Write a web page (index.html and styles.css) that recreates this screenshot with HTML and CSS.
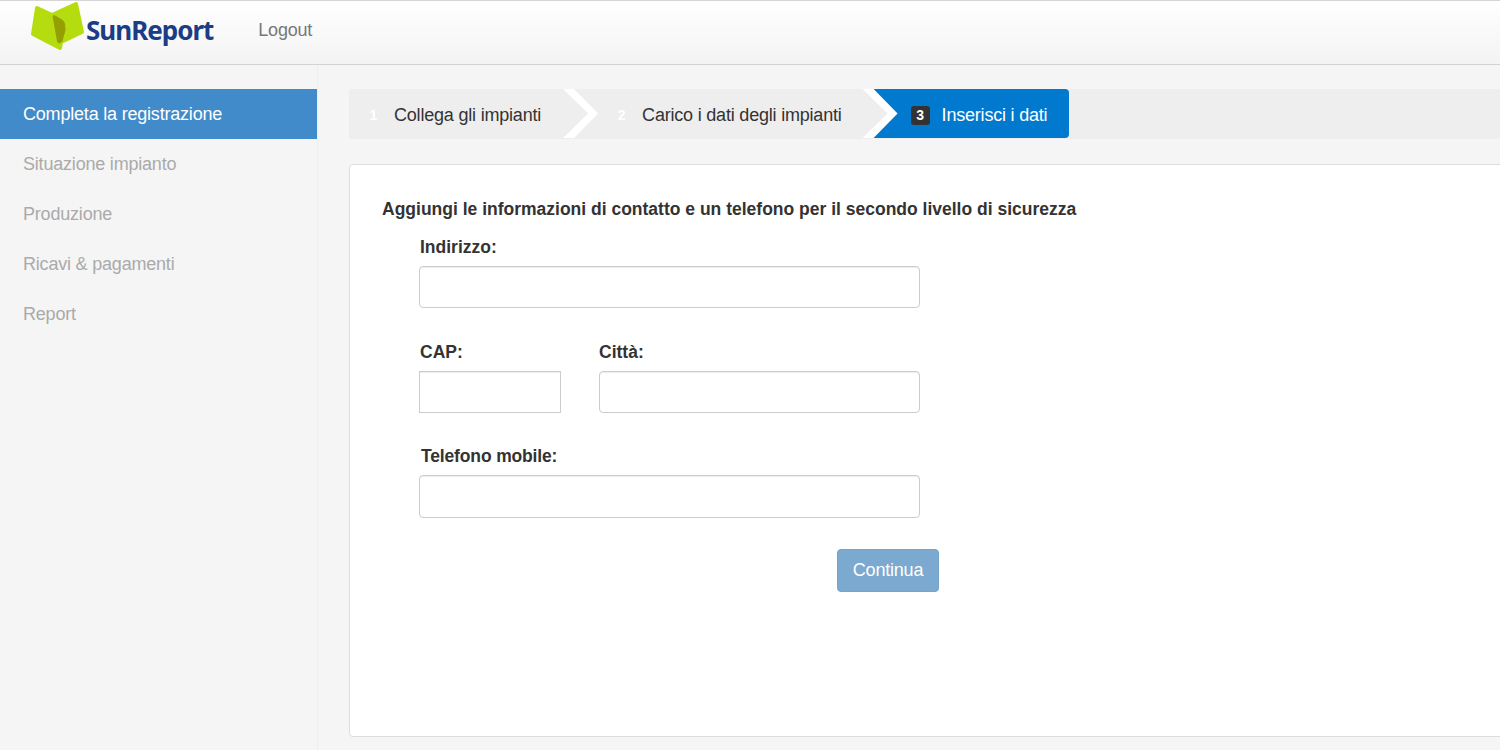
FILE: index.html
```html
<!DOCTYPE html>
<html lang="it">
<head>
<meta charset="utf-8">
<title>SunReport</title>
<link rel="stylesheet" href="styles.css">
</head>
<body>
<header class="topbar">
  <a class="brand" href="#">
    <svg class="brand-mark" width="58" height="52" viewBox="0 0 58 52" aria-hidden="true">
      <path class="mark-light" d="M8 7 L23 14 L47 3 L53 31 L32 41 L31 47 L4 33 Z"/>
      <path class="mark-dark" d="M24 15 Q24 14 26 15 L33 19 Q35 20 35.500 23 L36 29 L33 40 Q32 42 30 42 Q29 42 28.500 40 Z"/>
    </svg>
    <span class="brand-name">SunReport</span>
  </a>
  <a class="logout" href="#">Logout</a>
</header>
<div class="layout">
  <nav class="sidebar">
    <a class="nav-item active" href="#">Completa la registrazione</a>
    <a class="nav-item" href="#">Situazione impianto</a>
    <a class="nav-item" href="#">Produzione</a>
    <a class="nav-item" href="#">Ricavi &amp; pagamenti</a>
    <a class="nav-item" href="#">Report</a>
  </nav>
  <main class="content">
    <ol class="steps">
      <li class="step first"><span class="badge">1</span><span>Collega gli impianti</span></li>
      <li class="step second"><span class="badge">2</span><span>Carico i dati degli impianti</span></li>
      <li class="step current"><span class="badge">3</span><span>Inserisci i dati</span></li>
    </ol>
    <section class="card">
      <h1 class="card-title">Aggiungi le informazioni di contatto e un telefono per il secondo livello di sicurezza</h1>
      <form class="form">
        <label class="field address">
          <span class="label">Indirizzo:</span>
          <input class="input" type="text">
        </label>
        <div class="row">
          <label class="field cap">
            <span class="label">CAP:</span>
            <input class="input square" type="text">
          </label>
          <label class="field city">
            <span class="label flush">Città:</span>
            <input class="input" type="text">
          </label>
        </div>
        <label class="field phone">
          <span class="label shifted">Telefono mobile:</span>
          <input class="input tall" type="text">
        </label>
        <div class="actions"><button class="button" type="button">Continua</button></div>
      </form>
    </section>
  </main>
</div>
</body>
</html>
```
FILE: styles.css
```css
* { box-sizing: border-box; }
html, body { height: 100%; }
body {
  margin: 0;
  height: 750px;
  overflow: hidden;
  background: #f5f5f5;
  color: #333;
  font-family: "Liberation Sans", Arial, sans-serif;
  font-size: 18px;
  letter-spacing: -0.2px;
  display: flex;
  flex-direction: column;
}
a { text-decoration: none; }

.topbar {
  height: 65px;
  flex: none;
  display: flex;
  align-items: flex-start;
  border-top: 1px solid #d5d5d5;
  border-bottom: 1px solid #d2d2d2;
  background: linear-gradient(#ffffff, #f3f3f3);
}
.brand { display: flex; align-items: flex-start; margin-left: 29px; }
.brand-mark { display: block; flex: none; }
.mark-light { fill: #b5dc0e; stroke: #b5dc0e; stroke-width: 4; stroke-linejoin: round; }
.mark-dark { fill: #949f02; stroke: #949f02; stroke-width: 1; stroke-linejoin: round; }
.brand-name {
  margin: 12px 0 0 -1px;
  font-family: "Noto Sans", sans-serif;
  font-weight: 700;
  font-size: 26px;
  line-height: 34px;
  letter-spacing: -1px;
  color: #1b3d86;
}
.logout { margin: 18px 0 0 45px; color: #777; line-height: 22px; }

.layout { flex: 1; display: flex; min-height: 0; }
.sidebar {
  width: 318px;
  flex: none;
  padding-top: 24px;
  border-right: 1px solid #eeeeee;
}
.nav-item {
  display: block;
  height: 50px;
  line-height: 50px;
  padding-left: 23px;
  color: #aaa;
}
.nav-item.active { background: #428bca; color: #fff; }

.content { flex: 1; min-width: 0; padding: 24px 0 0 31px; }
.steps {
  display: flex;
  list-style: none;
  margin: 0;
  padding: 0;
  height: 50px;
  background: #eeeeee;
  border-top-left-radius: 4px;
}
.step {
  position: relative;
  display: flex;
  align-items: center;
  height: 49px;
  padding: 3px 22px 0 48px;
  color: #333;
}
.step.first { padding-left: 15px; border-top-left-radius: 4px; }
.step.second { padding-left: 49px; padding-right: 21px; }
.step::before, .step::after {
  content: "";
  position: absolute;
  top: 0;
  left: 100%;
  height: 100%;
}
.step::after {
  width: 35px;
  background: #fff;
  clip-path: polygon(0 0, 11px 0, 35px 50%, 11px 100%, 0 100%);
  z-index: 1;
}
.step::before {
  width: 25px;
  background: #eeeeee;
  clip-path: polygon(0 0, 25px 50%, 0 100%);
  z-index: 2;
}
.step.current {
  background: #0079ce;
  color: #fff;
  border-radius: 0 4px 4px 0;
}
.step.current::before, .step.current::after { display: none; }
.badge {
  width: 19px;
  height: 19px;
  margin-right: 11px;
  border-radius: 3px;
  color: #fff;
  font-size: 14px;
  font-weight: 700;
  letter-spacing: 0;
  line-height: 19px;
  text-align: center;
  flex: none;
}
.current .badge { background: #333; margin-right: 12px; }

.card {
  height: 573px;
  margin: 25px -20px 0 0;
  padding: 34px 32px;
  background: #fff;
  border: 1px solid #ddd;
  border-radius: 4px;
}
.card-title {
  margin: 0;
  font-size: 17.5px;
  letter-spacing: 0;
  line-height: 20px;
  font-weight: 700;
}
.form { width: 520px; margin-left: 37px; display: flex; flex-direction: column; }
.field { display: block; }
.label {
  display: block;
  margin-left: 1px;
  font-size: 17.5px;
  letter-spacing: 0;
  font-weight: 700;
  line-height: 20px;
  margin-bottom: 9px;
}
.label.flush { margin-left: 0; }
.label.shifted { margin-left: 2px; letter-spacing: -0.15px; }
.address { margin-top: 18px; }
.row { display: flex; gap: 38px; margin-top: 34px; width: 501px; }
.cap { width: 142px; flex: none; }
.city { flex: 1; }
.phone { margin-top: 33px; }
.input {
  display: block;
  width: 501px;
  height: 42px;
  background: #fff;
  border: 1px solid #ccc;
  border-radius: 4px;
  box-shadow: inset 0 1px 1px rgba(0, 0, 0, 0.075);
  outline: none;
}
.cap .input, .city .input { width: 100%; }
.input.square { border-radius: 0; }
.input.tall { height: 43px; }
.actions { display: flex; justify-content: flex-end; margin-top: 31px; }
.button {
  width: 102px;
  height: 43px;
  padding: 0;
  background: #7ca9cf;
  border: 1px solid #74a3cc;
  border-radius: 4px;
  color: #fff;
  font: 18px "Liberation Sans", Arial, sans-serif;
  letter-spacing: -0.2px;
}
```
